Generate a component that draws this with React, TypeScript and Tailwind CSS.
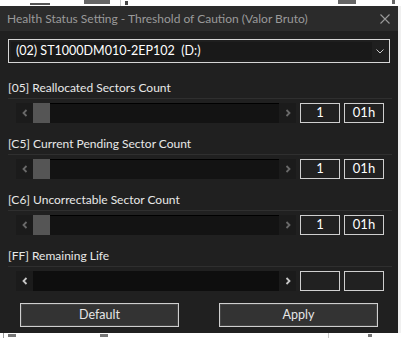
const rows = [
  { label: "[05] Reallocated Sectors Count", value: "1", hex: "01h", thumb: true },
  { label: "[C5] Current Pending Sector Count", value: "1", hex: "01h", thumb: true },
  { label: "[C6] Uncorrectable Sector Count", value: "1", hex: "01h", thumb: true },
  { label: "[FF] Remaining Life", value: "", hex: "", thumb: false },
];

function Arrow({ dir, bright }: { dir: "left" | "right"; bright: boolean }) {
  return (
    <div className="flex w-[17px] items-center justify-center">
      <svg width="6" height="8" viewBox="0 0 6 8">
        <path
          d={dir === "left" ? "M4.5 1 L1.5 4 L4.5 7" : "M1.5 1 L4.5 4 L1.5 7"}
          fill="none"
          stroke={bright ? "#c8c8c8" : "#6a6a6a"}
          strokeWidth="1.8"
        />
      </svg>
    </div>
  );
}

function ScrollBar({ thumb }: { thumb: boolean }) {
  return (
    <div className="flex h-[20px] w-[280px] bg-[#1b1b1b]">
      <Arrow dir="left" bright={!thumb} />
      {thumb && <div className="w-[17px] bg-[#555555]" />}
      <div
        className={
          thumb
            ? "flex-1 border-t border-black bg-[#131313]"
            : "flex-1 bg-[#0e0e0e]"
        }
      />
      <Arrow dir="right" bright={!thumb} />
    </div>
  );
}

function ValueBox({ text }: { text: string }) {
  return (
    <div className="flex h-[20px] w-[40px] items-center justify-center border border-[#cfcfcf] bg-[#212121] text-[13px] text-white">
      {text}
    </div>
  );
}

export default function App() {
  return (
    <div className="flex h-[338px] w-[401px] flex-col overflow-hidden bg-white font-['Segoe_UI',Lato,sans-serif]">
      {/* window behind, mostly hidden */}
      <div className="relative h-[6px] overflow-hidden">
        <div className="absolute left-[30px] top-[3px] h-[2px] w-[20px] bg-[#555]" />
        <div className="absolute left-[84px] top-0 h-[4px] w-[26px] bg-[#666]" />
        <div className="absolute left-[120px] top-0 h-[6px] w-px bg-[#c8c8c8]" />
        <div className="absolute left-[125px] top-[1px] h-[4px] w-[3px] bg-[#444]" />
        <div className="absolute left-[338px] top-0 h-[4px] w-[18px] bg-[#666]" />
        <div className="absolute left-[392px] top-0 h-[4px] w-[3px] bg-[#666]" />
      </div>

      <div className="flex">
        <div className="flex h-[327px] w-[398px] flex-col bg-[#202020]">
          {/* title bar */}
          <div className="flex h-[25px] items-center justify-between bg-[#2b2b2b] pl-[7px] pr-[8px]">
            <span className="text-[12px] text-[#9a9a9a]">
              Health Status Setting - Threshold of Caution (Valor Bruto)
            </span>
            <svg width="10" height="10" viewBox="0 0 10 10">
              <path d="M0.5 0.5 L9.5 9.5 M9.5 0.5 L0.5 9.5" stroke="#9a9a9a" strokeWidth="1.1" />
            </svg>
          </div>

          <div className="flex flex-col px-2 pt-2">
            {/* drive select */}
            <div className="flex h-[24px] items-center border border-[#d6d6d6] bg-[#1f1f1f] p-[2px]">
              <div className="flex h-full w-[361px] items-center bg-[#191919] pl-[5px] text-[12.5px] text-white">
                (02) ST1000DM010-2EP102&nbsp;&nbsp;(D:)
              </div>
              <div className="flex flex-1 items-center justify-center">
                <svg width="8" height="5" viewBox="0 0 8 5">
                  <path d="M0.5 0.5 L4 4 L7.5 0.5" fill="none" stroke="#c8c8c8" strokeWidth="1" />
                </svg>
              </div>
            </div>

            <div className="mt-[15px] flex flex-col gap-[11px]">
              {rows.map((r) => (
                <div key={r.label} className="flex flex-col">
                  <div className="flex h-[20px] items-center text-[12px] text-[#e8e8e8]">
                    {r.label}
                  </div>
                  <div className="h-px w-[384px] bg-[#2f2f2f]" />
                  <div className="mt-[4px] flex gap-[4px] pl-2">
                    <ScrollBar thumb={r.thumb} />
                    <ValueBox text={r.value} />
                    <ValueBox text={r.hex} />
                  </div>
                </div>
              ))}
            </div>

            <div className="mt-[12px] flex gap-[40px] px-[12px]">
              {["Default", "Apply"].map((b) => (
                <button
                  key={b}
                  className="flex h-[24px] w-[160px] items-center justify-center border border-[#cfcfcf] bg-[#333333] text-[12.5px] text-[#e6e6e6] shadow-[inset_0_0_0_1px_#444]"
                >
                  {b}
                </button>
              ))}
            </div>
          </div>
        </div>
        <div className="flex-1 bg-[#f0f0f0]" />
      </div>

      <div className="relative flex-1 overflow-hidden">
        <div className="absolute left-[3px] top-0 h-[5px] w-px bg-[#9a9a9a]" />
        <div className="absolute left-[8px] top-[1px] h-[3px] w-[8px] bg-[#777]" />
        <div className="absolute left-[100px] top-[1px] h-[3px] w-[8px] bg-[#777]" />
        <div className="absolute left-[328px] top-0 h-[5px] w-px bg-[#c8c8c8]" />
        <div className="absolute left-[368px] top-[1px] h-[3px] w-[4px] bg-[#777]" />
      </div>
    </div>
  );
}
